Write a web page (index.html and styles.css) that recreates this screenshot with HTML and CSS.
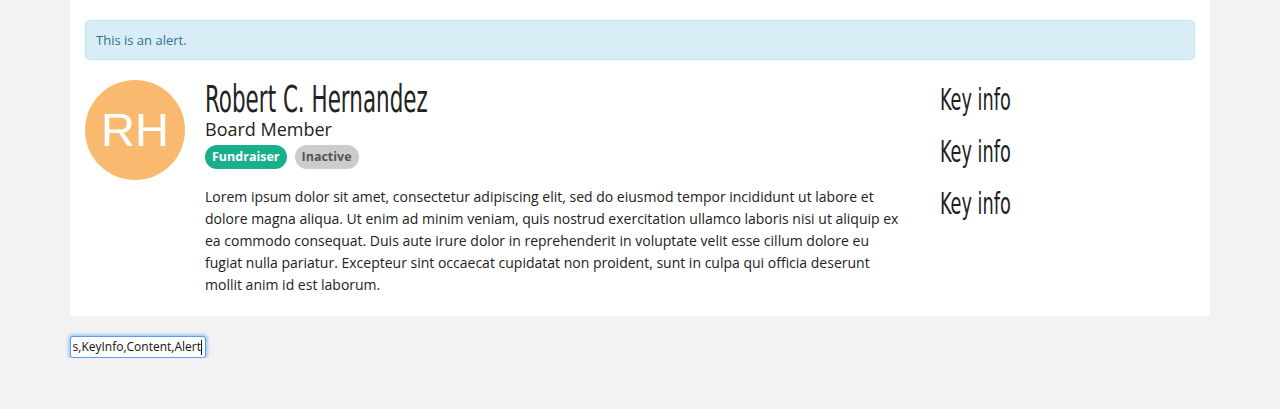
FILE: index.html
```html
<!DOCTYPE html>
<html>
<head>
<meta charset="utf-8">
<link rel="stylesheet" href="styles.css">
</head>
<body>
<div class="panel">
  <div class="alert">This is an alert.</div>
  <div class="media">
    <div class="avatar">RH</div>
    <div class="main">
      <h1 class="name"><span class="narrow">Robert C. Hernandez</span></h1>
      <div class="role">Board Member</div>
      <div class="badges">
        <span class="badge badge-green">Fundraiser</span>
        <span class="badge badge-grey">Inactive</span>
      </div>
      <p class="content">Lorem ipsum dolor sit amet, consectetur adipiscing elit, sed do eiusmod tempor incididunt ut labore et dolore magna aliqua. Ut enim ad minim veniam, quis nostrud exercitation ullamco laboris nisi ut aliquip ex ea commodo consequat. Duis aute irure dolor in reprehenderit in voluptate velit esse cillum dolore eu fugiat nulla pariatur. Excepteur sint occaecat cupidatat non proident, sunt in culpa qui officia deserunt mollit anim id est laborum.</p>
    </div>
    <div class="keyinfo">
      <div class="key"><span class="narrow-key">Key info</span></div>
      <div class="key"><span class="narrow-key">Key info</span></div>
      <div class="key"><span class="narrow-key">Key info</span></div>
    </div>
  </div>
</div>
<div class="field"><span class="field-text">s,KeyInfo,Content,Alert</span><span class="caret"></span></div>
</body>
</html>
```
FILE: styles.css
```css
html, body {
  margin: 0;
  padding: 0;
  background: #f2f2f2;
  font-family: "Open Sans", "Liberation Sans", sans-serif;
  color: #222;
}
.panel {
  margin-left: 70px;
  width: 1140px;
  box-sizing: border-box;
  background: #fff;
  padding: 20px 15px 20px 15px;
}
.alert {
  background: #d9edf7;
  border: 1px solid #bce8f1;
  border-radius: 4px;
  color: #31708f;
  font-size: 13px;
  line-height: 18px;
  padding: 10px 10px;
  margin-bottom: 20px;
}
.media {
  display: grid;
  grid-template-columns: 100px 700px 1fr;
  column-gap: 20px;
}
.avatar {
  width: 100px;
  height: 100px;
  border-radius: 50%;
  background: #f9b96f;
  color: #fff;
  font-family: "Liberation Sans", Arial, sans-serif;
  font-size: 47px;
  line-height: 100px;
  text-align: center;
}
.name {
  margin: 0;
  font-family: "DejaVu Sans Condensed", "DejaVu Sans", sans-serif;
  font-stretch: condensed;
  font-weight: normal;
  font-size: 37px;
  line-height: 40px;
  height: 40px;
  color: #222;
  white-space: nowrap;
}
.narrow {
  display: inline-block;
  transform: scaleX(0.645);
  transform-origin: left center;
}
.role {
  font-size: 18px;
  line-height: 18px;
  color: #222;
}
.badges {
  display: flex;
  gap: 8px;
  margin-top: 7px;
}
.badge {
  font-size: 12.5px;
  font-weight: bold;
  line-height: 24px;
  height: 24px;
  padding: 0 7px;
  border-radius: 12px;
}
.badge-green {
  background: #1aaf8c;
  color: #fff;
}
.badge-grey {
  background: #cccccc;
  color: #555;
}
.content {
  margin: 17px 0 0 0;
  font-size: 14px;
  line-height: 22px;
  color: #222;
}
.keyinfo {
  margin-left: 15px;
  margin-top: -6px;
}
.key {
  font-family: "DejaVu Sans Condensed", "DejaVu Sans", sans-serif;
  font-stretch: condensed;
  font-size: 30px;
  line-height: 52px;
  height: 52px;
  color: #222;
  white-space: nowrap;
}
.narrow-key {
  display: inline-block;
  transform: scaleX(0.655);
  transform-origin: left center;
}
.field {
  margin: 20px 0 0 70px;
  width: 136px;
  height: 22px;
  box-sizing: border-box;
  border: 1px solid #5b9ee6;
  border-radius: 3px;
  box-shadow: 0 0 3px 2px #a6cdf7;
  background: #fff;
  font-size: 12px;
  line-height: 20px;
  padding: 0 3px 0 4px;
  display: flex;
  justify-content: flex-end;
  align-items: center;
  overflow: hidden;
  white-space: nowrap;
  color: #111;
}
.caret {
  display: inline-block;
  flex: none;
  width: 1px;
  height: 15px;
  background: #111;
}
```
